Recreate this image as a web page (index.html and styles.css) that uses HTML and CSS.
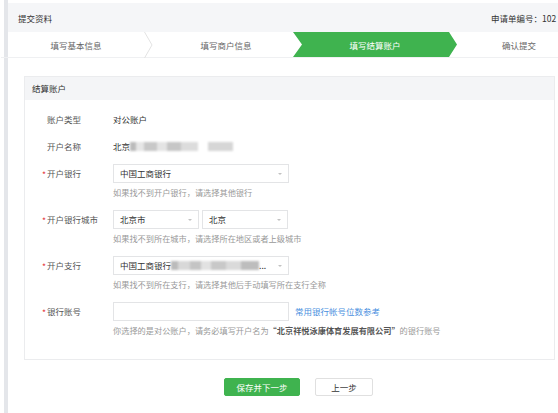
FILE: index.html
```html
<!DOCTYPE html>
<html lang="zh-CN">
<head>
  <meta charset="UTF-8" />
  <title>提交资料</title>
  <link rel="stylesheet" href="styles.css">
</head>
<body>
  <div class="page">
    <!-- 顶部标题 -->
    <div class="topbar">
      <span class="title">提交资料</span>
      <span class="order">申请单编号：102</span>
    </div>

    <!-- 步骤条 -->
    <div class="steps">
      <div class="step">填写基本信息
        <svg class="chev" viewBox="0 0 9 26"><polyline points="0.5,0 8,13 0.5,26" fill="none" stroke="#e3e3e3" stroke-width="1"/></svg>
      </div>
      <div class="step">填写商户信息</div>
      <div class="step active">填写结算账户</div>
      <div class="step last">确认提交</div>
    </div>

    <!-- 结算账户 -->
    <div class="panel">
      <div class="panel-head">结算账户</div>
      <div class="panel-body">
        <div class="row">
          <label class="lbl">账户类型</label>
          <div class="val">对公账户</div>
        </div>
        <div class="row">
          <label class="lbl">开户名称</label>
          <div class="val">北京<span class="blur blur-name"></span></div>
        </div>
        <div class="row field">
          <label class="lbl req">开户银行</label>
          <div>
            <div class="sel">中国工商银行</div>
            <p class="hint">如果找不到开户银行，请选择其他银行</p>
          </div>
        </div>
        <div class="row field">
          <label class="lbl req">开户银行城市</label>
          <div>
            <div class="sel-group">
              <div class="sel sel-half">北京市</div>
              <div class="sel sel-half">北京</div>
            </div>
            <p class="hint">如果找不到所在城市，请选择所在地区或者上级城市</p>
          </div>
        </div>
        <div class="row field">
          <label class="lbl req">开户支行</label>
          <div>
            <div class="sel">中国工商银行<span class="blur blur-branch"></span>...</div>
            <p class="hint">如果找不到所在支行，请选择其他后手动填写所在支行全称</p>
          </div>
        </div>
        <div class="row field last">
          <label class="lbl req">银行账号</label>
          <div>
            <div class="input-line">
              <input type="text" class="txt">
              <a href="#" class="link">常用银行帐号位数参考</a>
            </div>
            <p class="hint">你选择的是对公账户，请务必填写开户名为<strong>“北京祥悦泳康体育发展有限公司”</strong>的银行账号</p>
          </div>
        </div>
      </div>
    </div>

    <div class="actions">
      <button class="btn btn-primary">保存并下一步</button>
      <button class="btn">上一步</button>
    </div>
  </div>
</body>
</html>
```

FILE: styles.css
```css
body {
  margin: 0;
  font-family: "Noto Sans CJK SC", "Liberation Sans", sans-serif;
  font-size: 8.5px;
  color: #333;
  background: #fff;
  overflow: hidden;
}
.page {
  margin-left: 4px;
  border-left: 4px solid #e4e6ea;
  width: 620px;
  height: 413px;
  padding-top: 3px;
  box-sizing: border-box;
}
.topbar {
  display: grid;
  grid-template-columns: 473px auto;
  align-items: center;
  height: 29px;
  padding-left: 10px;
  background: #f5f6f8;
  color: #333;
}
.order {
  white-space: nowrap;
}

/* 步骤条 */
.steps {
  display: flex;
  height: 26px;
  margin-left: -7px;
  border-bottom: 1px solid #eff0f2;
  box-sizing: border-box;
}
.step {
  position: relative;
  flex: 0 0 150px;
  display: flex;
  align-items: center;
  justify-content: center;
  color: #666;
}
.step.active {
  flex-basis: 164px;
  margin-left: -8px;
  margin-right: -6px;
  background: #3fb34f;
  color: #fff;
  clip-path: polygon(0 0, 156px 0, 100% 50%, 156px 100%, 0 100%, 9px 50%);
}
.step.last {
  flex-basis: 136px;
}
.chev {
  position: absolute;
  right: -2px;
  top: 0;
  width: 9px;
  height: 26px;
}

/* 面板 */
.panel {
  margin: 18px 0 0 16px;
  width: 531px;
  border: 1px solid #ebecee;
  box-sizing: border-box;
}
.panel-head {
  height: 23px;
  line-height: 23px;
  padding-left: 7px;
  background: #f4f5f7;
  color: #333;
}
.panel-body {
  padding: 10px 0 23px 17px;
}
.row {
  display: grid;
  grid-template-columns: 71px 1fr;
  margin-bottom: 8px;
  line-height: 19px;
}
.row.field {
  margin-bottom: 12px;
}
.row.last {
  margin-bottom: 0;
}
.lbl {
  position: relative;
  padding-left: 5px;
  color: #555;
}
.lbl.req::before {
  content: "*";
  position: absolute;
  left: 0;
  top: 1px;
  color: #e4393c;
}
.val {
  color: #333;
}
.sel {
  position: relative;
  width: 176px;
  height: 19px;
  line-height: 17px;
  padding-left: 6px;
  border: 1px solid #e3e4e6;
  box-sizing: border-box;
  color: #333;
  white-space: nowrap;
}
.sel::after {
  content: "";
  position: absolute;
  right: 6px;
  top: 8px;
  border-left: 2px solid transparent;
  border-right: 2px solid transparent;
  border-top: 2px solid #c2c2c2;
}
.sel-group {
  display: flex;
  gap: 3px;
}
.sel-half {
  width: 86px;
}
.hint {
  margin: 3px 0 0;
  line-height: 12px;
  font-size: 8.2px;
  color: #999;
  white-space: nowrap;
}
.hint strong {
  color: #555;
}
.input-line {
  display: flex;
  align-items: center;
  gap: 6px;
}
.txt {
  width: 176px;
  height: 19px;
  margin: 0;
  padding: 0 6px;
  border: 1px solid #e3e4e6;
  box-sizing: border-box;
  outline: none;
}
.link {
  color: #4a8fe0;
  text-decoration: none;
}

/* 打码区域 */
.blur {
  display: inline-block;
  height: 9px;
  vertical-align: -1px;
  filter: blur(1.2px);
}
.blur-name {
  width: 103px;
  background: linear-gradient(90deg, #bbb 0 6%, #e6e6e6 6% 14%, #c8c8c8 14% 26%, #e4e4e4 26% 36%, #c6c6c6 36% 50%, #dcdcdc 50% 66%, #fff 66% 76%, #d6d6d6 76% 100%);
}
.blur-branch {
  width: 88px;
  background: linear-gradient(90deg, #bbb 0 8%, #d8d8d8 8% 22%, #c4c4c4 22% 34%, #e2e2e2 34% 46%, #c8c8c8 46% 62%, #dadada 62% 80%, #bdbdbd 80% 100%);
}

/* 按钮 */
.actions {
  display: flex;
  gap: 15px;
  margin-top: 18px;
  padding-left: 216px;
}
.btn {
  height: 18px;
  width: 58px;
  padding: 0;
  font-family: inherit;
  font-size: 8.5px;
  color: #333;
  background: #fff;
  border: 1px solid #e0e0e0;
  border-radius: 2px;
  cursor: pointer;
}
.btn-primary {
  width: 76px;
  color: #fff;
  background: #3fb34f;
  border-color: #3fb34f;
}
```
